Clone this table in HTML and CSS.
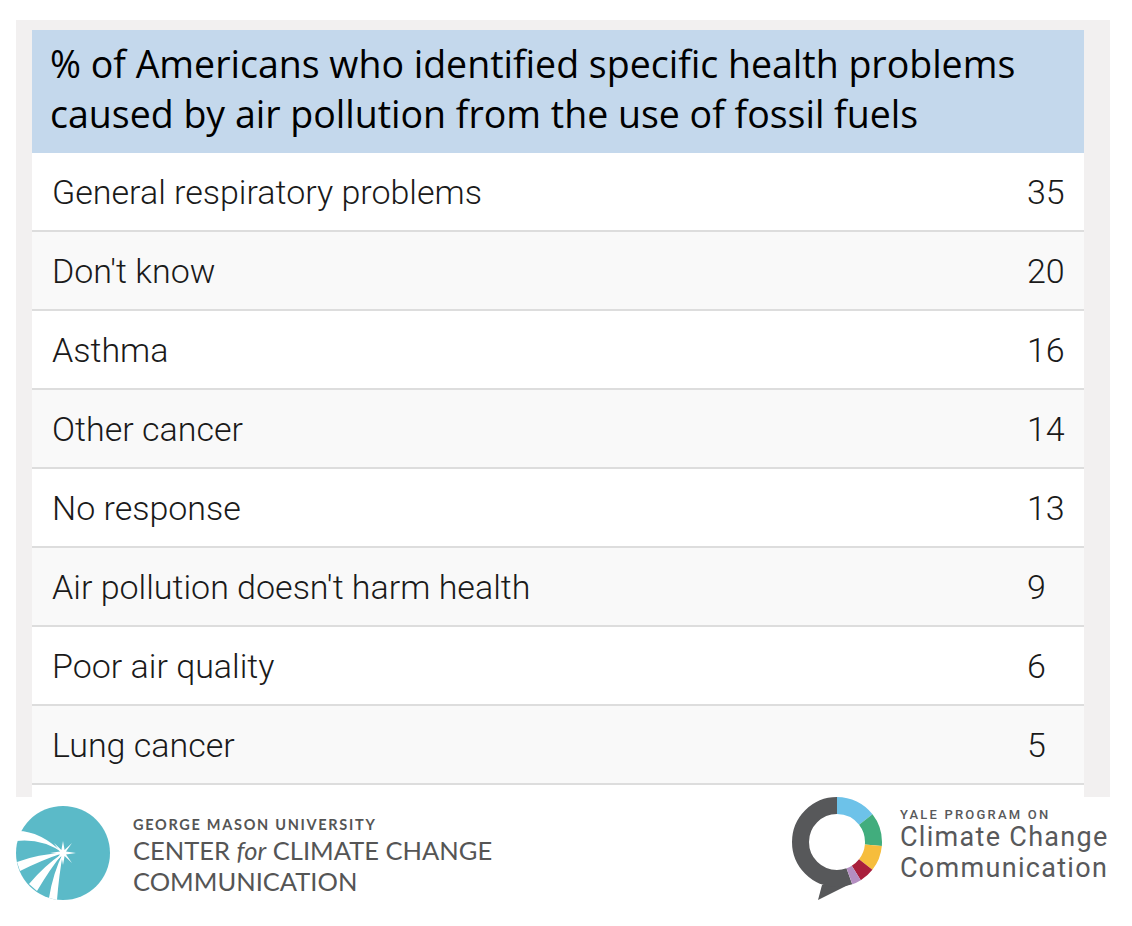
FILE: index.html
```html
<!DOCTYPE html>
<html lang="en">
<head>
<meta charset="utf-8">
<title>Health problems caused by air pollution</title>
<link rel="stylesheet" href="styles.css">
</head>
<body>
<div class="panel">
  <div class="table">
    <div class="title">% of Americans who identified specific health problems<br>caused by air pollution from the use of fossil fuels</div>
    <div class="row"><span class="label">General respiratory problems</span><span class="num">35</span></div>
    <div class="row alt"><span class="label">Don't know</span><span class="num">20</span></div>
    <div class="row"><span class="label">Asthma</span><span class="num">16</span></div>
    <div class="row alt"><span class="label">Other cancer</span><span class="num">14</span></div>
    <div class="row"><span class="label">No response</span><span class="num">13</span></div>
    <div class="row alt"><span class="label">Air pollution doesn't harm health</span><span class="num">9</span></div>
    <div class="row"><span class="label">Poor air quality</span><span class="num">6</span></div>
    <div class="row alt"><span class="label">Lung cancer</span><span class="num">5</span></div>
    <div class="row"></div>
  </div>
</div>
<div class="footer">
  <div class="gmu">
    <svg class="gmu-mark" width="96" height="96" viewBox="0 0 96 96">
      <circle cx="47" cy="48" r="47" fill="#5bbac8"/>
      <path d="M0 0 L42 0 Q24 3 14 11 Q6 18 3 26 L0 26 Z" fill="#fff"/>
      <path d="M47 48 Q24 26 2 26 L0 36 Q26 33 47 48 Z" fill="#fff"/>
      <path d="M47 48 Q22 49 1 57 L4 66 Q26 55 47 48 Z" fill="#fff"/>
      <path d="M47 48 Q28 61 13 79 L21 86 Q34 64 47 48 Z" fill="#fff"/>
      <path d="M47 48 Q37 68 33 93 L41 95 Q43 70 47 48 Z" fill="#fff"/>
      <polygon points="47,36 48.6,45 56,38 50,46.5 60,48 50,49.5 56,58 48.6,51 47,60 45.4,51 38,58 44,49.5 34,48 44,46.5 38,38 45.4,45" fill="#fff"/>
    </svg>
    <div class="gmu-text">
      <div class="gmu-uni">GEORGE MASON UNIVERSITY</div>
      <div class="gmu-big">CENTER <i>for</i> CLIMATE CHANGE</div>
      <div class="gmu-big">COMMUNICATION</div>
    </div>
  </div>
  <div class="yale">
    <svg class="yale-mark" width="90" height="106" viewBox="0 0 90 106">
      <polygon points="30,88 26,103 60,86" fill="#57585a"/>
      <g transform="rotate(-90 45 45)" fill="none" stroke-width="17">
        <circle cx="45" cy="45" r="36.5" stroke="#57585a" stroke-dasharray="127.4 229.34" stroke-dashoffset="-101.9"/>
        <circle cx="45" cy="45" r="36.5" stroke="#6dc2e9" stroke-dasharray="33.1 229.34" stroke-dashoffset="0"/>
        <circle cx="45" cy="45" r="36.5" stroke="#41ad7d" stroke-dasharray="27.4 229.34" stroke-dashoffset="-33.1"/>
        <circle cx="45" cy="45" r="36.5" stroke="#f6bd3c" stroke-dasharray="21 229.34" stroke-dashoffset="-60.5"/>
        <circle cx="45" cy="45" r="36.5" stroke="#a91f3c" stroke-dasharray="12.7 229.34" stroke-dashoffset="-81.5"/>
        <circle cx="45" cy="45" r="36.5" stroke="#b48ec1" stroke-dasharray="7.6 229.34" stroke-dashoffset="-94.2"/>
      </g>
    </svg>
    <div class="yale-text">
      <div class="yale-small">YALE PROGRAM ON</div>
      <div class="yale-big">Climate Change</div>
      <div class="yale-big">Communication</div>
    </div>
  </div>
</div>
</body>
</html>
```
FILE: styles.css
```css
html, body {
  margin: 0;
  padding: 0;
  background: #ffffff;
}
body {
  padding: 20px 0 0 16px;
  width: 1116px;
}
.panel {
  width: 1094px;
  height: 777px;
  box-sizing: border-box;
  padding: 10px 26px 0 16px;
  background: #f2f0f0;
  overflow: hidden;
}
.table {
  width: 1052px;
}
.title {
  box-sizing: border-box;
  height: 123px;
  padding: 8.5px 0 0 18px;
  background: #c4d8ec;
  color: #000;
  font-family: "Open Sans", Lato, sans-serif;
  font-size: 37.5px;
  line-height: 50px;
}
.row {
  box-sizing: border-box;
  height: 79px;
  display: flex;
  align-items: center;
  background: #ffffff;
  border-bottom: 2px solid #dddddd;
  font-family: Roboto, "Liberation Sans", sans-serif;
  font-weight: 300;
  font-size: 34px;
  color: #1a1a1a;
}
.row.alt {
  background: #f9f9f9;
}
.label {
  flex: 1;
  padding-left: 20px;
}
.num {
  width: 57px;
}
.footer {
  display: flex;
  justify-content: space-between;
  align-items: flex-start;
  width: 1094px;
}
.gmu {
  display: flex;
  align-items: flex-start;
  padding-top: 8px;
}
.gmu-mark {
  display: block;
}
.gmu-text {
  margin-left: 21px;
  padding-top: 10px;
  color: #555555;
  font-family: Lato, "Noto Sans", sans-serif;
}
.gmu-uni {
  font-size: 14.5px;
  font-weight: 700;
  letter-spacing: 1.7px;
  line-height: 20px;
}
.gmu-big {
  font-size: 25.5px;
  line-height: 31px;
}
.gmu-big i {
  font-style: italic;
}
.yale {
  display: flex;
  align-items: flex-start;
}
.yale-mark {
  display: block;
}
.yale-text {
  width: 210px;
  margin-left: 18px;
  padding-top: 11px;
  white-space: nowrap;
  color: #58595b;
  font-family: Roboto, "Liberation Sans", sans-serif;
}
.yale-small {
  font-size: 13px;
  font-weight: 500;
  letter-spacing: 2.2px;
  line-height: 14px;
}
.yale-big {
  font-size: 27px;
  letter-spacing: 1.3px;
  line-height: 31px;
}
```
